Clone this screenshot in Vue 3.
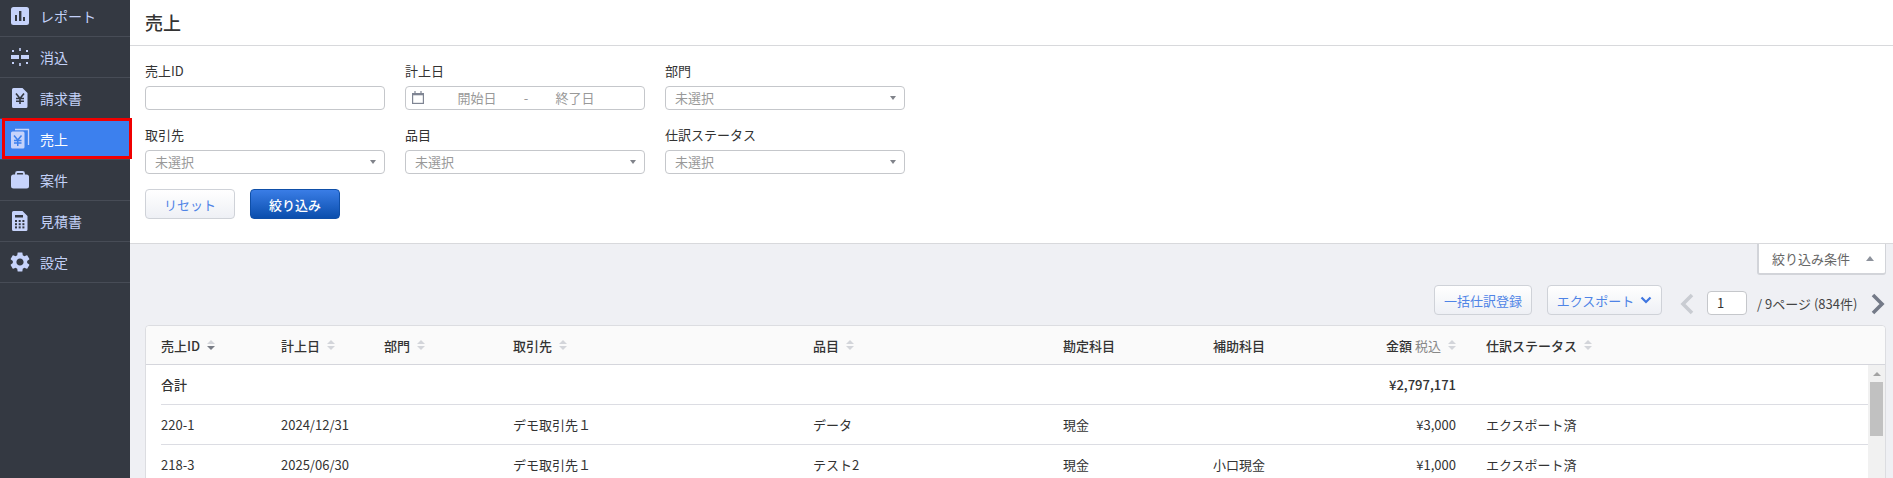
<script setup>
const nav = [
  { key: 'report', label: 'レポート' },
  { key: 'clear', label: '消込' },
  { key: 'invoice', label: '請求書' },
  { key: 'sales', label: '売上', active: true },
  { key: 'case', label: '案件' },
  { key: 'quote', label: '見積書' },
  { key: 'gear', label: '設定' }
]
const heads = [
  { label: '売上ID', sort: 'desc' },
  { label: '計上日', sort: 'none' },
  { label: '部門', sort: 'none' },
  { label: '取引先', sort: 'none' },
  { label: '品目', sort: 'none' },
  { label: '勘定科目' },
  { label: '補助科目' },
  { label: '金額', note: '税込', sort: 'none', right: true },
  { label: '仕訳ステータス', sort: 'none' }
]
const rows = [
  ['220-1', '2024/12/31', '', 'デモ取引先１', 'データ', '現金', '', '¥3,000', 'エクスポート済'],
  ['218-3', '2025/06/30', '', 'デモ取引先１', 'テスト2', '現金', '小口現金', '¥1,000', 'エクスポート済']
]
const calcKeys = [0, 1, 2, 3, 4, 5, 6, 7, 8]
</script>

<template>
  <div class="page">
    <aside class="sidebar">
      <ul class="nav">
        <li v-for="item in nav" :key="item.key" class="nav-item" :class="{ active: item.active }">
          <svg class="nav-icon" viewBox="0 0 22 22">
            <g v-if="item.key === 'report'">
              <rect x="2" y="2" width="18" height="18" rx="2.5" class="ic" />
              <rect x="6" y="10" width="2" height="6" class="cut" />
              <rect x="10" y="6" width="2.4" height="10" class="cut" />
              <rect x="14" y="12" width="2" height="4" class="cut" />
            </g>
            <g v-else-if="item.key === 'clear'">
              <rect x="2" y="9" width="8" height="4" class="ic" />
              <rect x="12" y="9" width="8" height="4" class="ic" />
              <rect x="10.2" y="2" width="1.6" height="3" class="ic" />
              <rect x="10.2" y="17" width="1.6" height="3" class="ic" />
              <rect x="3" y="4" width="2" height="2" class="ic" />
              <rect x="17" y="4" width="2" height="2" class="ic" />
              <rect x="3" y="16" width="2" height="2" class="ic" />
              <rect x="17" y="16" width="2" height="2" class="ic" />
            </g>
            <g v-else-if="item.key === 'invoice'">
              <path d="M4.500 1h9l5 5V19.500a1.500 1.500 0 0 1-1.500 1.500h-12.500a1.500 1.500 0 0 1-1.500-1.500v-17A1.500 1.500 0 0 1 4.500 1z" class="ic" />
              <path d="M7 6.500l4 5 4-5M11 11.500V17M7 11.500h8M7 14.200h8" class="yen" />
            </g>
            <g v-else-if="item.key === 'sales'">
              <path d="M6 1.500h13.500V17" fill="none" stroke="#c6d3fb" stroke-width="1.300" />
              <path d="M3.500 3.500h10.500a1.500 1.500 0 0 1 1.500 1.500v14a1.500 1.500 0 0 1-1.500 1.500h-10.500A1.500 1.500 0 0 1 2 19V5a1.500 1.500 0 0 1 1.500-1.500z" class="ic" />
              <path d="M5 7.500l3.750 4.500 3.750-4.500M8.750 12v6M5 12.500h7.500M5 15h7.500" class="yen-active" />
            </g>
            <g v-else-if="item.key === 'case'">
              <path d="M7 6V4.500A1.500 1.500 0 0 1 8.500 3h5A1.500 1.500 0 0 1 15 4.500V6" fill="none" stroke="#c6d3fb" stroke-width="1.800" />
              <rect x="2" y="5.500" width="18" height="14" rx="2.500" class="ic" />
            </g>
            <g v-else-if="item.key === 'quote'">
              <path d="M4.500 1h9l5 5V19.500a1.500 1.500 0 0 1-1.500 1.500h-12.500a1.500 1.500 0 0 1-1.500-1.500v-17A1.500 1.500 0 0 1 4.500 1z" class="ic" />
              <rect x="6" y="5" width="8" height="2.500" class="cut" />
              <rect v-for="n in calcKeys" :key="n" :x="6 + (n % 3) * 3.700" :y="10 + Math.floor(n / 3) * 3.200" width="2" height="2" class="cut" />
            </g>
            <path v-else transform="translate(-1 -1)" class="ic" d="M19.140 12.940c.04-.3.06-.61.06-.94 0-.32-.02-.64-.07-.94l2.030-1.580c.18-.14.23-.41.12-.61l-1.920-3.320c-.12-.22-.37-.29-.59-.22l-2.390.96c-.5-.38-1.030-.7-1.620-.94l-.36-2.540c-.04-.24-.24-.41-.48-.41h-3.840c-.24 0-.43.17-.47.41l-.36 2.540c-.59.24-1.130.57-1.620.94l-2.390-.96c-.22-.08-.47 0-.59.22L2.740 8.870c-.12.21-.08.47.12.61l2.030 1.580c-.05.3-.09.63-.09.94s.02.64.07.94l-2.030 1.580c-.18.14-.23.41-.12.61l1.920 3.320c.12.22.37.29.59.22l2.390-.96c.5.38 1.030.7 1.620.94l.36 2.540c.05.24.24.41.48.41h3.840c.24 0 .44-.17.47-.41l.36-2.540c.59-.24 1.130-.56 1.620-.94l2.390.96c.22.08.47 0 .59-.22l1.920-3.320c.12-.22.07-.47-.12-.61l-2.010-1.580zM12 15.600c-1.980 0-3.600-1.620-3.600-3.600s1.620-3.600 3.600-3.600 3.600 1.620 3.600 3.600-1.620 3.600-3.600 3.600z" />
          </svg>
          <span>{{ item.label }}</span>
          <i v-if="item.active" class="highlight"></i>
        </li>
      </ul>
    </aside>

    <main class="main">
      <header class="title-bar"><h1>売上</h1></header>

      <section class="filters">
        <div class="filter-grid">
          <div class="field">
            <label>売上ID</label>
            <div class="control"></div>
          </div>
          <div class="field">
            <label>計上日</label>
            <div class="control date">
              <svg class="cal" viewBox="0 0 12 13">
                <rect x=".6" y="2.600" width="10.800" height="9.800" fill="none" stroke="#7f8593" stroke-width="1.200" />
                <path d="M.6 3.200h10.800" stroke="#7f8593" stroke-width="2.200" />
                <path d="M3 0v2M9 0v2" stroke="#7f8593" stroke-width="1.200" />
              </svg>
              <span>開始日</span>
              <span class="dash">-</span>
              <span>終了日</span>
            </div>
          </div>
          <div class="field">
            <label>部門</label>
            <div class="control select">未選択<i class="caret"></i></div>
          </div>
          <div class="field">
            <label>取引先</label>
            <div class="control select">未選択<i class="caret"></i></div>
          </div>
          <div class="field">
            <label>品目</label>
            <div class="control select">未選択<i class="caret"></i></div>
          </div>
          <div class="field">
            <label>仕訳ステータス</label>
            <div class="control select">未選択<i class="caret"></i></div>
          </div>
        </div>
        <div class="actions">
          <button class="btn">リセット</button>
          <button class="btn primary">絞り込み</button>
        </div>
      </section>

      <section class="content">
        <div class="tab-row">
          <div class="tab">絞り込み条件<i class="tab-caret"></i></div>
        </div>
        <div class="toolbar">
          <button class="btn bulk">一括仕訳登録</button>
          <button class="btn export">エクスポート
            <svg viewBox="0 0 12 8" class="chev"><path d="M1.500 1.500L6 6l4.500-4.500" fill="none" stroke="#3f76e0" stroke-width="2.200" /></svg>
          </button>
          <div class="pager">
            <svg viewBox="0 0 14 22" class="arrow"><path d="M12 2L3 11l9 9" fill="none" stroke="#c9ccd2" stroke-width="3.600" /></svg>
            <div class="page-input">1</div>
            <span class="page-text">/ 9ページ (834件)</span>
            <svg viewBox="0 0 14 22" class="arrow"><path d="M2 2l9 9-9 9" fill="none" stroke="#747a88" stroke-width="3.600" /></svg>
          </div>
        </div>

        <div class="card">
          <div class="row head">
            <div v-for="h in heads" :key="h.label" class="cell" :class="{ right: h.right }">
              <span>{{ h.label }}</span>
              <span v-if="h.note" class="note">{{ h.note }}</span>
              <span v-if="h.sort" class="sort">
                <i class="up"></i>
                <i class="down" :class="{ on: h.sort === 'desc' }"></i>
              </span>
            </div>
          </div>
          <div class="body">
            <div class="rows">
              <div class="row total">
                <div class="cell">合計</div>
                <div class="cell"></div>
                <div class="cell"></div>
                <div class="cell"></div>
                <div class="cell"></div>
                <div class="cell"></div>
                <div class="cell"></div>
                <div class="cell right">¥2,797,171</div>
                <div class="cell"></div>
              </div>
              <div v-for="r in rows" :key="r[0]" class="row">
                <div v-for="(c, i) in r" :key="i" class="cell" :class="{ right: i === 7 }">{{ c }}</div>
              </div>
            </div>
            <div class="scrollbar">
              <i class="sb-up"></i>
              <div class="thumb"></div>
            </div>
          </div>
        </div>
      </section>
    </main>
  </div>
</template>

<style>
html, body { margin: 0; overflow: hidden; }
</style>

<style scoped>
.page {
  display: flex;
  width: 1893px;
  height: 478px;
  overflow: hidden;
  font-family: "Noto Sans CJK JP", "Noto Sans", sans-serif;
  font-size: 13px;
  color: #333;
  background: #eff0f4;
}
.sidebar {
  flex: 0 0 130px;
  background: #343942;
  position: relative;
  z-index: 2;
}
.nav { list-style: none; margin: -4px 0 0; padding: 0; }
.nav-item {
  position: relative;
  display: flex;
  align-items: center;
  height: 40px;
  padding-left: 9px;
  border-bottom: 1px solid #474c56;
  color: #c3d1f8;
  font-size: 14px;
}
.nav-item span { margin-left: 9px; }
.nav-item.active { background: #3c80ee; color: #fff; }
.nav-icon { width: 22px; height: 22px; flex: none; }
.ic { fill: #c6d3fb; }
.cut { fill: #343942; }
.yen { fill: none; stroke: #343942; stroke-width: 1.600; }
.yen-active { fill: none; stroke: #3c80ee; stroke-width: 1.500; }
.highlight {
  position: absolute;
  left: 2px;
  top: -1px;
  width: 124px;
  height: 35px;
  border: 3px solid #f00000;
  pointer-events: none;
}
.main { flex: 1; min-width: 0; }
.title-bar {
  height: 45px;
  background: #fff;
  border-bottom: 1px solid #d8d9dc;
  padding-left: 15px;
  display: flex;
  align-items: center;
}
.title-bar h1 { margin: 0 0 1px; font-size: 18px; font-weight: 500; color: #333; }
.filters {
  height: 198px;
  box-sizing: border-box;
  background: #fff;
  border-bottom: 1px solid #d8d9dc;
  padding: 15px 15px 0;
}
.filter-grid {
  display: grid;
  grid-template-columns: repeat(3, 240px);
  column-gap: 20px;
  row-gap: 15px;
}
.field label { display: block; height: 20px; line-height: 20px; margin-bottom: 5px; }
.control {
  height: 24px;
  box-sizing: border-box;
  border: 1px solid #c5c7cb;
  border-radius: 4px;
  background: #fff;
  color: #999;
  line-height: 22px;
}
.select { position: relative; padding-left: 9px; }
.caret {
  position: absolute;
  right: 8px;
  top: 9px;
  border-left: 3px solid transparent;
  border-right: 3px solid transparent;
  border-top: 4px solid #80838a;
}
.date {
  display: grid;
  grid-template-columns: 23px 96px 2px 96px;
  text-align: center;
  align-items: center;
}
.cal { width: 12px; height: 13px; margin-left: 6px; margin-top: -2px; }
.dash { display: flex; justify-content: center; }
.actions { display: flex; gap: 15px; margin-top: 15px; }
.btn {
  height: 30px;
  box-sizing: border-box;
  font: inherit;
  border: 1px solid #cfd2d8;
  border-radius: 4px;
  background: linear-gradient(#fff, #eef0f5);
  color: #4f84e6;
  padding: 0;
  width: 90px;
}
.primary {
  border-color: #0f4fa8;
  background: linear-gradient(#3a7de6, #0a4ead);
  color: #fff;
  font-weight: 500;
}
.content { padding: 0 7px 0 15px; }
.tab-row { display: flex; justify-content: flex-end; height: 30px; }
.tab {
  position: relative;
  width: 129px;
  height: 31px;
  box-sizing: border-box;
  background: #fff;
  border-style: solid;
  border-color: #d2d4d9;
  border-width: 0 1px 2px 2px;
  border-radius: 0 0 3px 3px;
  color: #666;
  line-height: 29px;
  padding-left: 13px;
}
.tab-caret {
  position: absolute;
  right: 11px;
  top: 12px;
  border-left: 4px solid transparent;
  border-right: 4px solid transparent;
  border-bottom: 5px solid #8d929c;
}
.toolbar { display: flex; justify-content: flex-end; align-items: flex-start; margin-top: 11px; }
.bulk { width: 98px; }
.export {
  width: 115px;
  margin-left: 15px;
  display: flex;
  align-items: center;
  justify-content: center;
  gap: 6px;
}
.chev { width: 12px; height: 8px; }
.pager { display: flex; align-items: center; height: 30px; margin-left: 18px; width: 206px; }
.arrow { width: 14px; height: 22px; flex: none; margin-top: 7px; }
.page-input {
  width: 40px;
  height: 24px;
  box-sizing: border-box;
  margin: 6px 0 0 13px;
  border: 1px solid #c5c7cb;
  border-radius: 4px;
  background: #fff;
  line-height: 22px;
  padding-left: 9px;
}
.page-text { margin: 6px 0 0 10px; white-space: nowrap; width: 114px; color: #444; }
.card {
  margin-top: 10px;
  background: #fff;
  border: 1px solid #dcdde1;
  border-radius: 4px 4px 0 0;
}
.row {
  display: grid;
  grid-template-columns: 120px 103px 129px 300px 250px 150px 120px 123px 1fr;
  height: 39px;
  border-bottom: 1px solid #dcdde3;
  margin-left: 15px;
  align-items: center;
}
.cell { white-space: nowrap; display: flex; align-items: center; min-width: 0; }
.cell:nth-child(9) { padding-left: 30px; }
.head {
  margin-left: 0;
  padding-left: 15px;
  height: 38px;
  background: #fafafa;
  border-bottom: 1px solid #d5d6dc;
  font-weight: 500;
  border-radius: 4px 4px 0 0;
}
.total { font-weight: 500; }
.right { justify-content: flex-end; }
.note { color: #888; font-weight: 400; margin-left: 3px; }
.sort { display: inline-flex; flex-direction: column; gap: 2px; margin-left: 7px; }
.up, .down { display: block; width: 0; height: 0; border-left: 4px solid transparent; border-right: 4px solid transparent; }
.up { border-bottom: 4px solid #d3d5da; }
.down { border-top: 4px solid #d3d5da; }
.down.on { border-top-color: #777b84; }
.body { display: flex; height: 200px; }
.rows { flex: 1; min-width: 0; }
.scrollbar { flex: 0 0 17px; background: #f1f1f1; position: relative; }
.sb-up {
  position: absolute;
  left: 5px;
  top: 7px;
  border-left: 4px solid transparent;
  border-right: 4px solid transparent;
  border-bottom: 4px solid #a3a3a3;
}
.thumb { position: absolute; left: 2px; right: 2px; top: 17px; height: 54px; background: #c1c1c1; }
</style>
